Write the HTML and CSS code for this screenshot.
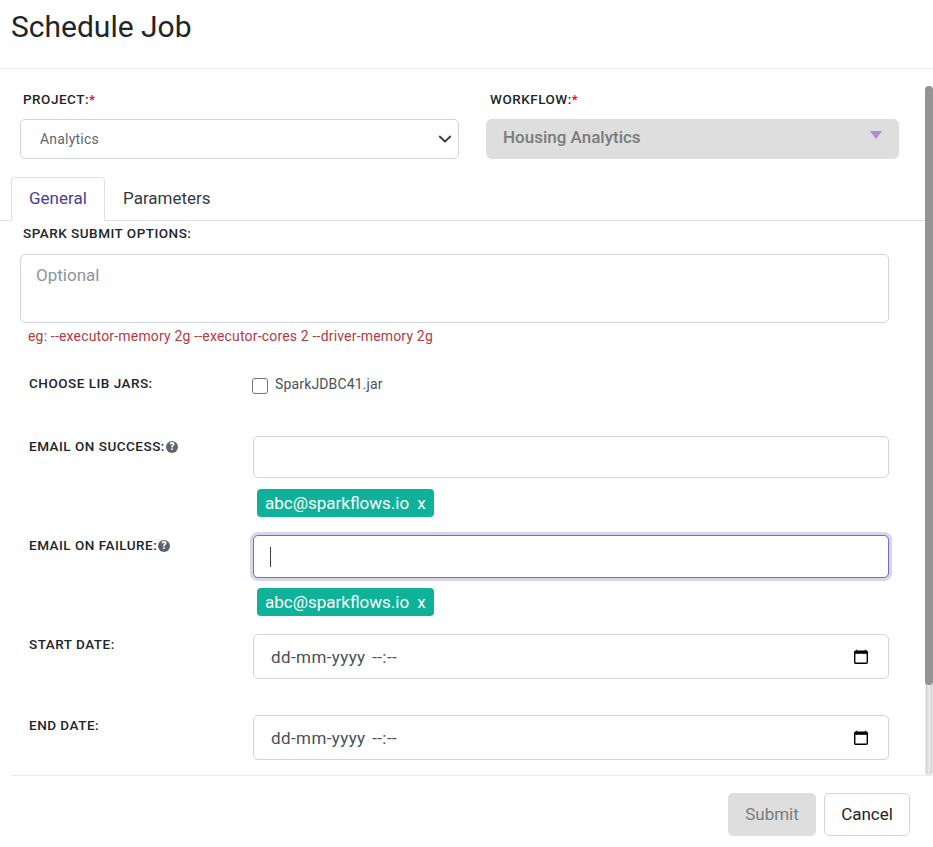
FILE: index.html
```html
<!DOCTYPE html>
<html lang="en">
<head>
  <meta charset="UTF-8">
  <meta name="viewport" content="width=device-width, initial-scale=1.0">
  <title>Schedule Job</title>
  <link rel="stylesheet" href="styles.css">
</head>
<body>

  <header class="modal-header">
    <h1>Schedule Job</h1>
  </header>

  <main class="modal-body">
    <div class="form-area">

      <div class="top-row">
        <div class="top-col project-col">
          <label class="label">PROJECT:<span class="req">*</span></label>
          <div class="select-box">
            <span>Analytics</span>
            <svg class="chevron" width="16" height="16" viewBox="0 0 16 16"><path d="M2.800 5.500L8 10.700l5.200-5.200" fill="none" stroke="#343a40" stroke-width="1.800" stroke-linecap="round" stroke-linejoin="round"/></svg>
          </div>
        </div>
        <div class="top-col workflow-col">
          <label class="label">WORKFLOW:<span class="req">*</span></label>
          <div class="disabled-box">
            <span>Housing Analytics</span>
            <i class="caret-down"></i>
          </div>
        </div>
      </div>

      <nav class="tabs">
        <a class="tab active">General</a>
        <a class="tab">Parameters</a>
      </nav>

      <div class="spark-block">
        <label class="label">SPARK SUBMIT OPTIONS:</label>
        <textarea class="textarea" placeholder="Optional"></textarea>
        <p class="hint">eg: --executor-memory 2g --executor-cores 2 --driver-memory 2g</p>
      </div>

      <div class="row row-jars">
        <label class="label">CHOOSE LIB JARS:</label>
        <div class="check-line">
          <span class="checkbox"></span>
          <span>SparkJDBC41.jar</span>
        </div>
      </div>

      <div class="row row-success">
        <label class="label">EMAIL ON SUCCESS:<svg class="help" width="12" height="12" viewBox="0 0 12 12"><circle cx="6" cy="6" r="6" fill="#5c6470"/><text x="6" y="9.300" text-anchor="middle" class="help-mark">?</text></svg></label>
        <div class="field-col">
          <div class="input"></div>
          <div class="chip">abc@sparkflows.io<span class="chip-x">x</span></div>
        </div>
      </div>

      <div class="row row-failure">
        <label class="label">EMAIL ON FAILURE:<svg class="help" width="12" height="12" viewBox="0 0 12 12"><circle cx="6" cy="6" r="6" fill="#5c6470"/><text x="6" y="9.300" text-anchor="middle" class="help-mark">?</text></svg></label>
        <div class="field-col">
          <div class="input focused"><span class="text-caret"></span></div>
          <div class="chip">abc@sparkflows.io<span class="chip-x">x</span></div>
        </div>
      </div>

      <div class="row row-start">
        <label class="label">START DATE:</label>
        <div class="field-col">
          <div class="input date-input">
            <span>dd-mm-yyyy --:--</span>
            <svg width="16" height="16" viewBox="0 0 16 16"><path d="M3.500 0.800v2M12.500 0.800v2" stroke="#000" stroke-width="1.300"/><rect x="1.700" y="2.200" width="12.600" height="12" rx="1" fill="none" stroke="#000" stroke-width="1.400"/><rect x="1.700" y="2.200" width="12.600" height="2.600" fill="#000"/></svg>
          </div>
        </div>
      </div>

      <div class="row row-end">
        <label class="label">END DATE:</label>
        <div class="field-col">
          <div class="input date-input">
            <span>dd-mm-yyyy --:--</span>
            <svg width="16" height="16" viewBox="0 0 16 16"><path d="M3.500 0.800v2M12.500 0.800v2" stroke="#000" stroke-width="1.300"/><rect x="1.700" y="2.200" width="12.600" height="12" rx="1" fill="none" stroke="#000" stroke-width="1.400"/><rect x="1.700" y="2.200" width="12.600" height="2.600" fill="#000"/></svg>
          </div>
        </div>
      </div>

    </div>

    <div class="scrollbar"><div class="scroll-thumb"></div></div>
  </main>

  <footer class="modal-footer">
    <button class="btn btn-submit">Submit</button>
    <button class="btn btn-cancel">Cancel</button>
  </footer>

</body>
</html>
```

FILE: styles.css
```css
* {
  box-sizing: border-box;
}
body {
  margin: 0;
  height: 847px;
  overflow: hidden;
  background: #fff;
  font-family: Roboto, sans-serif;
  color: #212529;
}
.modal-header {
  height: 69px;
  padding: 11px 11px 0;
  border-bottom: 1px solid #e9ecef;
}
h1 {
  margin: 0;
  font-size: 30px;
  font-weight: 400;
  line-height: 32px;
}
.modal-body {
  display: flex;
  height: 706px;
  overflow: hidden;
}
.form-area {
  width: 925px;
}
.label {
  display: block;
  font-size: 13.500px;
  font-weight: 500;
  line-height: 16px;
  letter-spacing: 0.5px;
  color: #212529;
}
.req {
  color: #f00;
}
.help {
  margin-left: 1px;
  vertical-align: -1.500px;
}
.help-mark {
  font-family: Roboto, sans-serif;
  font-size: 10px;
  font-weight: 900;
  letter-spacing: 0;
  fill: #fff;
}

/* top selects */
.top-row {
  display: flex;
  padding: 22px 0 0 20px;
}
.top-col .label {
  margin-bottom: 12px;
}
.project-col {
  width: 439px;
  margin-right: 27px;
}
.project-col .label {
  padding-left: 3px;
}
.workflow-col {
  width: 413px;
}
.workflow-col .label {
  padding-left: 4px;
}
.select-box {
  display: flex;
  align-items: center;
  justify-content: space-between;
  height: 40px;
  padding: 0 5px 0 19px;
  border: 1px solid #d1d3de;
  border-radius: 5px;
  font-size: 14px;
  letter-spacing: 0.2px;
  color: #5f666d;
}
.disabled-box {
  position: relative;
  height: 40px;
  padding: 7px 17px;
  border-radius: 6px;
  background: #dedede;
  font-size: 17px;
  font-weight: 500;
  line-height: 22px;
  color: #7b7b7b;
}
.caret-down {
  position: absolute;
  top: 12px;
  right: 17px;
  border-left: 6px solid transparent;
  border-right: 6px solid transparent;
  border-top: 8px solid #a98fdb;
}

/* tabs */
.tabs {
  display: flex;
  height: 44px;
  margin-top: 18px;
  padding-left: 11px;
  border-bottom: 1px solid #dfe0ea;
}
.tab {
  height: 44px;
  padding: 0 17px;
  border: 1px solid transparent;
  font-size: 17px;
  line-height: 41px;
  color: #343a40;
}
.tab.active {
  width: 94px;
  border-color: #dfe0ea #dfe0ea #fff;
  border-radius: 4px 4px 0 0;
  background: #fff;
  color: #4f3a9e;
}

/* spark options */
.spark-block {
  padding: 4px 36px 0 20px;
}
.spark-block .label {
  padding-left: 3px;
  margin-bottom: 13px;
}
.textarea {
  display: block;
  width: 869px;
  height: 69px;
  padding: 9px 15px;
  border: 1px solid #d1d3de;
  border-radius: 5px;
  resize: none;
  outline: none;
  font-family: Roboto, sans-serif;
  font-size: 17px;
  line-height: 22px;
}
.textarea::placeholder {
  color: #8d949e;
}
.hint {
  margin: 5px 0 0 8px;
  font-size: 14px;
  line-height: 17px;
  letter-spacing: 0.18px;
  color: #b33a42;
}

/* form rows */
.row {
  display: flex;
  padding-left: 29px;
}
.row > .label {
  width: 224px;
  flex-shrink: 0;
}
.row-jars {
  margin-top: 31px;
}
.row-jars > .label {
  margin-top: -1px;
}
.row-success {
  margin-top: 42px;
}
.row-failure {
  margin-top: 18px;
}
.row-start {
  margin-top: 18px;
}
.row-end {
  margin-top: 36px;
}
.row-success > .label,
.row-failure > .label {
  padding-top: 2px;
}
.row-start > .label,
.row-end > .label {
  padding-top: 2px;
}
.check-line {
  display: flex;
  align-items: flex-start;
  font-size: 14px;
  line-height: 16px;
  letter-spacing: 0.15px;
  color: #4d5257;
}
.checkbox {
  width: 16px;
  height: 16px;
  margin: 2px 7px 0 -1px;
  border: 1px solid #767676;
  border-radius: 3px;
  background: #fff;
}
.field-col {
  width: 636px;
}
.input {
  display: flex;
  align-items: center;
  height: 42px;
  padding: 0 17px;
  border: 1px solid #d1d3de;
  border-radius: 5px;
  background: #fff;
}
.input.focused {
  height: 43px;
  padding-left: 16px;
  border-color: #7b68c8;
  box-shadow: 0 0 0 3px #d8d4ea;
}
.text-caret {
  width: 1px;
  height: 20px;
  background: #3a3f44;
}
.date-input {
  justify-content: space-between;
  height: 45px;
  padding-right: 19px;
  font-size: 17px;
  letter-spacing: 0.4px;
  word-spacing: 2px;
  color: #495057;
}
.chip {
  display: inline-flex;
  align-items: center;
  height: 28px;
  margin: 11px 0 0 4px;
  padding: 0 8px 1px;
  border-radius: 4px;
  background: #0eb298;
  font-size: 17px;
  font-weight: 400;
  color: #fff;
}
.row-failure .chip {
  margin-top: 10px;
}
.chip-x {
  margin-left: 8px;
}

/* scrollbar */
.scrollbar {
  width: 8px;
  height: 689px;
  margin-top: 17px;
  border-radius: 4px;
  background: linear-gradient(to right, #fff 0, #cfcfcf 12%, #ececec 50%, #cfcfcf 88%, #fff 100%);
}
.scroll-thumb {
  height: 599px;
  border-radius: 4px;
  background: #939393;
}

/* footer */
.modal-footer {
  display: flex;
  justify-content: flex-end;
  gap: 8px;
  margin: 0 0 0 11px;
  padding: 17px 23px 0 0;
  border-top: 1px solid #e9ecef;
}
.btn {
  height: 43px;
  padding: 0 0 2px;
  border-radius: 5px;
  font-family: Roboto, sans-serif;
  font-size: 17px;
  font-weight: 400;
}
.btn-submit {
  width: 88px;
  border: 1px solid #dedede;
  background: #dedede;
  color: #7b7b7b;
}
.btn-cancel {
  width: 86px;
  border: 1px solid #d1d3de;
  background: #fff;
  color: #212529;
}
```
